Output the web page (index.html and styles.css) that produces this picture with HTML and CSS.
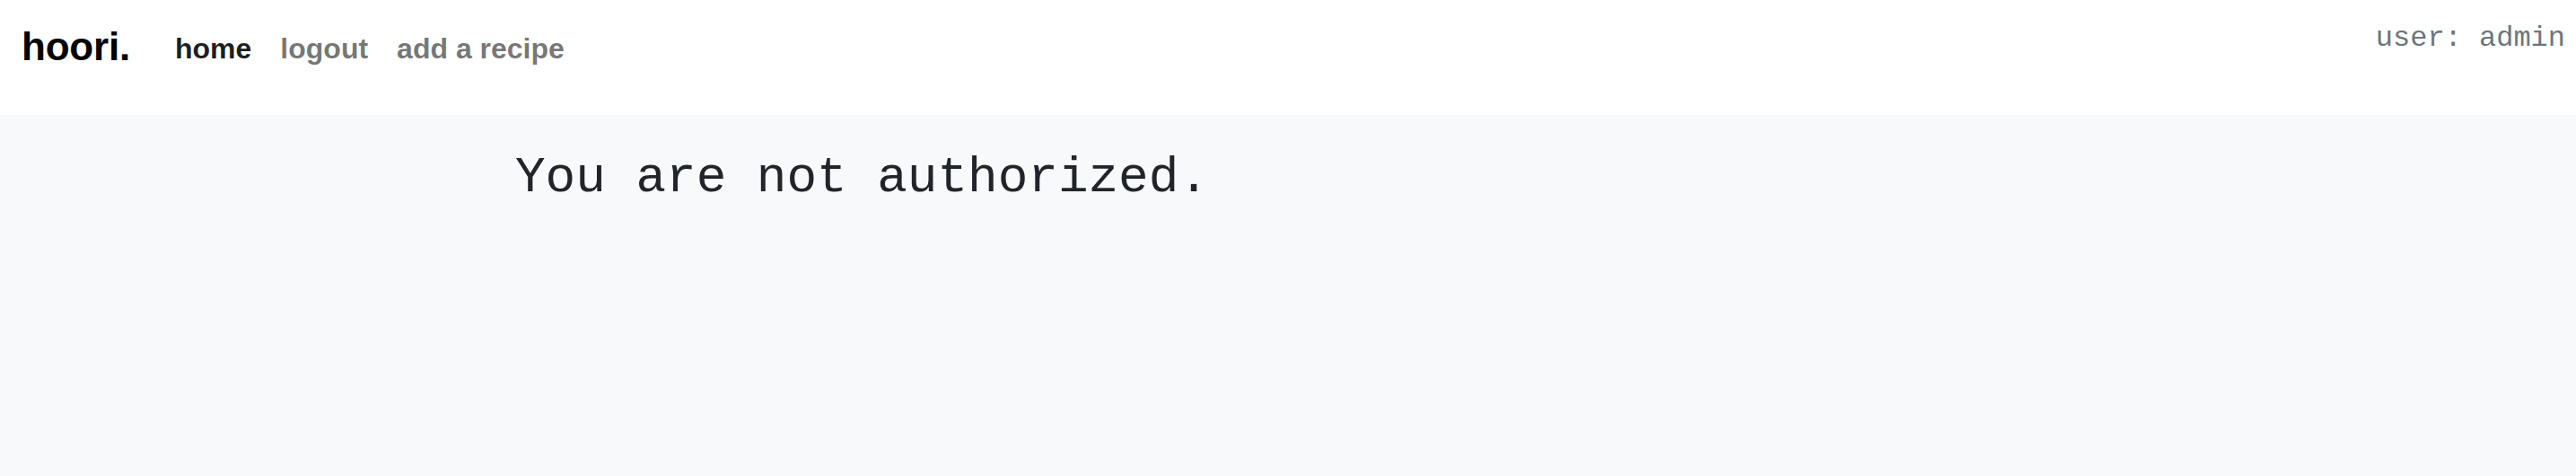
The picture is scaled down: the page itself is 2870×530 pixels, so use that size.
FILE: index.html
```html
<!DOCTYPE html>
<html lang="en">
<head>
<meta charset="utf-8">
<title>hoori.</title>
<link rel="stylesheet" href="styles.css">
</head>
<body>
<header class="topbar">
  <a class="brand" href="#">hoori.</a>
  <nav class="nav">
    <a class="nav-link active" href="#">home</a>
    <a class="nav-link" href="#">logout</a>
    <a class="nav-link" href="#">add a recipe</a>
  </nav>
  <div class="user">user: admin</div>
</header>
<main class="content">
  <h1 class="message">You are not authorized.</h1>
</main>
</body>
</html>
```

FILE: styles.css
```css
html, body {
  margin: 0;
  padding: 0;
}

body {
  background: #f8f9fa;
  color: #212529;
  font-family: "Liberation Sans", Arial, sans-serif;
  min-height: 530px;
}

.topbar {
  display: flex;
  align-items: flex-start;
  height: 128px;
  box-sizing: border-box;
  padding: 0 12px 0 24px;
  background: #ffffff;
}

.brand {
  margin-top: 30px;
  font-size: 44px;
  line-height: 44px;
  font-weight: 700;
  color: #000;
  text-decoration: none;
  letter-spacing: -0.2px;
}

.nav {
  display: flex;
  gap: 32px;
  margin-top: 38px;
  margin-left: 50px;
}

.nav-link {
  font-size: 32px;
  line-height: 32px;
  font-weight: 700;
  color: rgba(0, 0, 0, 0.55);
  text-decoration: none;
}

.nav-link.active {
  color: rgba(0, 0, 0, 0.9);
}

.user {
  margin-left: auto;
  margin-top: 27px;
  font-family: "Liberation Mono", "Courier New", monospace;
  font-size: 32px;
  line-height: 32px;
  color: #6c757d;
}

.content {
  width: 60%;
  margin: 0 auto;
  padding-top: 37px;
}

.message {
  margin: 0;
  font-family: "Liberation Mono", "Courier New", monospace;
  font-weight: 400;
  font-size: 56px;
  line-height: 1.2;
  color: #212529;
}
```
